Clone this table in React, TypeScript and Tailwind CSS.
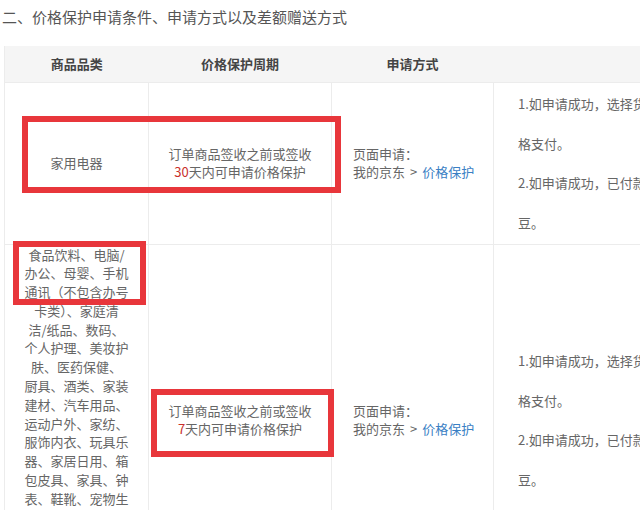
import React from 'react';

const cat2Lines = [
  '食品饮料、电脑/',
  '办公、母婴、手机',
  '通讯（不包含办号',
  '卡类）、家庭清',
  '洁/纸品、数码、',
  '个人护理、美妆护',
  '肤、医药保健、',
  '厨具、酒类、家装',
  '建材、汽车用品、',
  '运动户外、家纺、',
  '服饰内衣、玩具乐',
  '器、家居日用、箱',
  '包皮具、家具、钟',
  '表、鞋靴、宠物生',
  '活、图书、音像、',
  '电子书、珠宝首饰',
  '、奢侈品、礼品、',
  '农资绿植、生鲜',
];

const PeriodCell: React.FC<{ days: string }> = ({ days }) => (
  <td className="border-l border-[#ececec] text-center align-middle text-[13px] leading-[18px] text-[#666]">
    <div>订单商品签收之前或签收</div>
    <div>
      <span className="text-[#c9302c]">{days}</span>天内可申请价格保护
    </div>
  </td>
);

const WayCell: React.FC = () => (
  <td className="border-l border-[#ececec] pl-[21px] align-middle text-[13px] leading-[18px] text-[#666]">
    <div>页面申请：</div>
    <div>
      我的京东<span className="px-[5px]">&gt;</span><span className="text-[#3a80c4]">价格保护</span>
    </div>
  </td>
);

const GiftCell: React.FC = () => (
  <td className="border-l border-[#ececec] pl-[24px] align-middle whitespace-nowrap text-[13px] leading-[39.5px] text-[#666]">
    <div>1.如申请成功，选择货到付款方式的订单，按调整后的价</div>
    <div>格支付。</div>
    <div>2.如申请成功，已付款订单，差额部分将以京豆形式返还京</div>
    <div>豆。</div>
  </td>
);

const RedBox: React.FC<{ className: string }> = ({ className }) => (
  <div className={`pointer-events-none absolute border-[6px] border-[#e8363b] ${className}`} />
);

export default function App() {
  return (
    <div
      className="h-[510px] w-[640px] overflow-hidden bg-white"
      style={{ fontFamily: '"Noto Sans CJK SC", "Microsoft YaHei", sans-serif' }}
    >
      <div className="pl-[2px] pt-[6px] text-[15px] leading-[22px] text-[#555]">
        二、价格保护申请条件、申请方式以及差额赠送方式
      </div>

      <div className="relative mt-[18px] ml-[4px]">
        <table className="w-[800px] table-fixed border-collapse border-l border-[#ececec]">
          <colgroup>
            <col className="w-[144px]" />
            <col className="w-[183px]" />
            <col className="w-[162px]" />
            <col />
          </colgroup>
          <thead>
            <tr className="h-[36px] bg-[#f5f5f5] text-[13px] text-[#444]">
              <th className="text-center font-bold">商品品类</th>
              <th className="text-center font-bold">价格保护周期</th>
              <th className="text-center font-bold">申请方式</th>
              <th />
            </tr>
          </thead>
          <tbody>
            <tr className="h-[162px] border-t border-[#ececec]">
              <td className="text-center align-middle text-[13px] leading-[18px] text-[#666]">家用电器</td>
              <PeriodCell days="30" />
              <WayCell />
              <GiftCell />
            </tr>
            <tr className="h-[352px] border-t border-[#ececec]">
              <td className="pt-[1px] text-center align-top text-[13px] leading-[18.8px] text-[#666]">
                {cat2Lines.map((l) => (
                  <div key={l} className="whitespace-nowrap">{l}</div>
                ))}
              </td>
              <PeriodCell days="7" />
              <WayCell />
              <GiftCell />
            </tr>
          </tbody>
        </table>

        <RedBox className="left-[18px] top-[70px] h-[77px] w-[319px]" />
        <RedBox className="left-[9px] top-[195px] h-[64px] w-[133px]" />
        <RedBox className="left-[147px] top-[343px] h-[68px] w-[183px]" />
      </div>
    </div>
  );
}
